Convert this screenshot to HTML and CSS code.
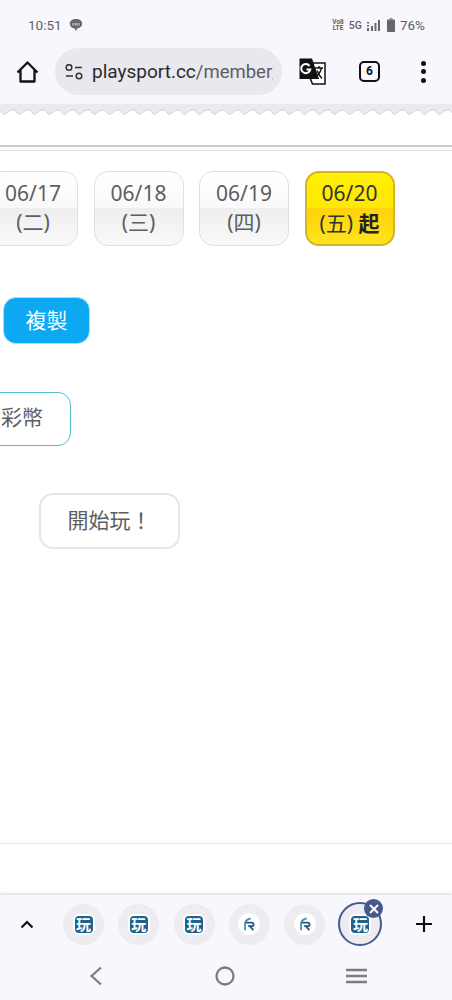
FILE: index.html
```html
<!DOCTYPE html>
<html lang="zh-Hant">
<head>
  <meta charset="UTF-8" />
  <meta name="viewport" content="width=device-width, initial-scale=1" />
  <title>playsport.cc</title>
  <link rel="stylesheet" href="styles.css">
</head>
<body>
  <svg class="defs" width="0" height="0">
    <symbol id="logo-r" viewBox="0 0 16 16">
      <path d="M3.500 15V7.500C3.500 4.500 6 2.500 10 1.500" fill="none" stroke="#2f9aa8" stroke-width="2"/>
      <path d="M4.500 6.500H11C14 6.500 14 10.500 11 10.500H7" fill="none" stroke="#26567f" stroke-width="2"/>
      <path d="M9 10.500L13 15" fill="none" stroke="#26567f" stroke-width="2"/>
    </symbol>
  </svg>

  <div class="statusbar">
    <div class="status-left">
      <span>10:51</span>
      <svg class="line-icon" width="14" height="14" viewBox="0 0 14 14">
        <path d="M7 1C3.400 1 .8 3 .8 5.800c0 2.500 2.100 4.300 5 4.700l.6 2.500 2-2.500c2.800-.5 4.800-2.300 4.800-4.700C13.200 3 10.600 1 7 1z" fill="#67676c"/>
        <path d="M4 5v2.500M6.200 5v2.500M8 5v2.500M10 5v2.500" stroke="#f8f7fe" stroke-width=".8"/>
      </svg>
    </div>
    <div class="status-right">
      <span class="volte">Vo8<br>LTE</span>
      <span class="fiveg">5G</span>
      <svg width="14" height="13" viewBox="0 0 14 13">
        <path d="M1 3h2v1.500H1zM1 6h2v1.500H1zM1 9h2v3H1zM5 7h2v5H5zM8.500 4h2v8h-2zM12 1h2v11h-2z" fill="#67676c"/>
      </svg>
      <svg class="battery" width="8" height="14" viewBox="0 0 8 14">
        <path d="M2.500 0h3v1.500h-3z" fill="#8b8b90"/>
        <rect y="1.500" width="8" height="12.500" rx="1" fill="#67676c"/>
      </svg>
      <span class="percent">76%</span>
    </div>
  </div>

  <div class="toolbar">
    <svg class="home" width="23" height="22" viewBox="0 0 23 22">
      <path d="M1.500 11.500L11.500 1.500l10 10M4.500 9v11.500h14V9" fill="none" stroke="#111" stroke-width="2.300" stroke-linejoin="round"/>
    </svg>
    <div class="urlbar">
      <svg width="18" height="16" viewBox="0 0 18 16">
        <circle cx="4" cy="3.500" r="2.800" fill="none" stroke="#333" stroke-width="1.500"/>
        <path d="M10 3.500h7M1 12h7" stroke="#333" stroke-width="1.600"/>
        <circle cx="14" cy="12" r="2.800" fill="none" stroke="#333" stroke-width="1.500"/>
      </svg>
      <span class="url"><span class="host">playsport.cc</span>/member/</span>
    </div>
    <svg class="translate" width="27" height="27" viewBox="0 0 27 27">
      <path d="M12 5h14v21H13.500l-2-5z" fill="#fff" stroke="#111" stroke-width="1.500"/>
      <path d="M.5.500h12.500l7 20.500H.5z" fill="#111"/>
      <path d="M10.500 7.800A4.600 4.600 0 1 0 11.300 11.500H7.500" fill="none" stroke="#fff" stroke-width="2"/>
      <path d="M16 10h8M20 8v2M22.500 10c-1 4-3 7-6 9M18 12.500c1 3 3 6 5 8" fill="none" stroke="#111" stroke-width="1.400"/>
    </svg>
    <div class="tabcount">6</div>
    <div class="dots"><i></i><i></i><i></i></div>
  </div>

  <svg class="wave" width="452" height="13">
    <defs>
      <pattern id="wave-p" width="15" height="13" patternUnits="userSpaceOnUse">
        <path d="M0 6C3 11 5 11 7.500 8.500 10 6 12 6 15 6V0H0z" fill="#ebebef"/>
        <path d="M0 6C3 11 5 11 7.500 8.500 10 6 12 6 15 6" fill="none" stroke="#cfcfd3"/>
      </pattern>
    </defs>
    <rect width="452" height="13" fill="url(#wave-p)"/>
  </svg>

  <div class="page">
    <div class="rule-block"></div>

    <div class="dates">
      <div class="date"><span class="day">06/17</span><span class="week">(二)</span></div>
      <div class="date"><span class="day">06/18</span><span class="week">(三)</span></div>
      <div class="date"><span class="day">06/19</span><span class="week">(四)</span></div>
      <div class="date date-on"><span class="day">06/20</span><span class="week">(五) <b>起</b></span></div>
    </div>

    <button class="btn-copy">複製</button>
    <button class="btn-coin">彩幣</button>
    <button class="btn-play">開始玩！</button>

    <div class="page-foot"></div>
  </div>

  <div class="tabstrip">
    <svg class="chev" width="14" height="9" viewBox="0 0 14 9">
      <path d="M1.500 7.500L7 2l5.500 5.500" fill="none" stroke="#111" stroke-width="2.200"/>
    </svg>
    <div class="tab"><span class="logo-wan">玩</span></div>
    <div class="tab"><span class="logo-wan">玩</span></div>
    <div class="tab"><span class="logo-wan">玩</span></div>
    <div class="tab"><span class="logo-white"><svg width="14" height="14"><use href="#logo-r"/></svg></span></div>
    <div class="tab"><span class="logo-white"><svg width="14" height="14"><use href="#logo-r"/></svg></span></div>
    <div class="tab tab-on">
      <span class="logo-wan">玩</span>
      <span class="tab-close">
        <svg width="10" height="10" viewBox="0 0 10 10"><path d="M1 1l8 8M9 1l-8 8" stroke="#fff" stroke-width="2"/></svg>
      </span>
    </div>
    <svg class="plus" width="18" height="18" viewBox="0 0 18 18">
      <path d="M9 1v16M1 9h16" stroke="#111" stroke-width="2.200"/>
    </svg>
  </div>

  <div class="navbar">
    <svg width="14" height="20" viewBox="0 0 14 20"><path d="M12 1.500L2.500 10l9.500 8.500" fill="none" stroke="#7d7d82" stroke-width="2.200"/></svg>
    <svg width="20" height="20" viewBox="0 0 20 20"><circle cx="10" cy="10" r="8.500" fill="none" stroke="#7d7d82" stroke-width="2.300"/></svg>
    <svg width="21" height="16" viewBox="0 0 21 16"><path d="M0 2h21M0 8h21M0 14h21" stroke="#7d7d82" stroke-width="2.300"/></svg>
  </div>
</body>
</html>
```

FILE: styles.css
```css
* {
  box-sizing: border-box;
}

html, body {
  margin: 0;
  padding: 0;
}

body {
  width: 452px;
  height: 1000px;
  overflow: hidden;
  display: flex;
  flex-direction: column;
  font-family: "Noto Sans", "Noto Sans CJK TC", sans-serif;
  background: #fff;
  color: #5e5e5e;
}

.defs {
  position: absolute;
}

/* status bar */
.statusbar {
  height: 44px;
  flex: none;
  background: #f8f7fe;
  padding: 6px 27px 0 28px;
  display: flex;
  justify-content: space-between;
  align-items: center;
  font-family: Roboto, sans-serif;
  font-size: 13.500px;
  color: #5f5f64;
}

.status-left {
  display: flex;
  align-items: center;
  gap: 7px;
}

.status-right {
  display: flex;
  align-items: center;
}

.volte {
  font-size: 6.500px;
  line-height: 6.500px;
  font-weight: 700;
  text-align: center;
  margin-right: 5px;
}

.fiveg {
  font-size: 10.500px;
  font-weight: 500;
  margin-right: 4px;
}

.battery {
  margin: 0 5px 0 7px;
}

/* toolbar */
.toolbar {
  height: 60px;
  flex: none;
  background: #f8f7fe;
  display: flex;
  align-items: center;
  padding: 0 0 5px 16px;
}

.home {
  flex: none;
}

.urlbar {
  width: 227px;
  height: 47px;
  margin-left: 16px;
  border-radius: 24px;
  background: #e8e8ee;
  display: flex;
  align-items: center;
  padding-left: 10px;
  gap: 9px;
  flex: none;
}

.url {
  width: 181px;
  overflow: hidden;
  white-space: nowrap;
  font-family: Roboto, sans-serif;
  font-size: 18.500px;
  color: #5c5c62;
}

.host {
  color: #2a2a2e;
  font-size: 19px;
}

.translate {
  margin-left: 17px;
  flex: none;
}

.tabcount {
  width: 21px;
  height: 21px;
  margin-left: 33px;
  border: 2px solid #111;
  border-radius: 5px;
  font-family: Roboto, sans-serif;
  font-size: 12px;
  font-weight: 700;
  line-height: 17px;
  text-align: center;
  color: #111;
  flex: none;
}

.dots {
  margin-left: 41px;
  display: flex;
  flex-direction: column;
  gap: 3.500px;
}

.dots i {
  display: block;
  width: 5px;
  height: 5px;
  border-radius: 50%;
  background: #111;
}

.wave {
  display: block;
  flex: none;
  background: #fff;
}

/* page */
.page {
  flex: 1;
  display: flex;
  flex-direction: column;
  align-items: flex-start;
  background: #fff;
}

.rule-block {
  width: 100%;
  height: 6px;
  margin-top: 28px;
  border-top: 2px solid #cdcdcd;
  border-bottom: 1px solid #e3e3e3;
  flex: none;
}

.dates {
  display: flex;
  gap: 15.500px;
  margin: 20px 0 0 -12px;
}

.date {
  width: 90px;
  height: 75px;
  border: 1px solid #e0e0e0;
  border-radius: 14px;
  overflow: hidden;
  display: flex;
  flex-direction: column;
  align-items: center;
  font-size: 21px;
  line-height: 28px;
  background: linear-gradient(#fff, #f9f9f9 49%, #eee 49%, #f9f9f9);
  flex: none;
}

.day {
  height: 36px;
  padding-top: 7px;
}

.date-on {
  border: 2px solid #d4b52a;
  color: #333;
  background: linear-gradient(#fff000, #ffe800 49%, #fdd20c 49%, #ffe41a);
}

.date-on .day {
  padding-top: 6px;
}

.date-on b {
  color: #222;
}

.btn-copy {
  width: 87px;
  height: 47px;
  margin: 51px 0 0 3px;
  border: 1px solid #a5def7;
  border-radius: 13px;
  background: #0ca8f1;
  color: #fff;
  font: 21px/1 "Noto Sans", "Noto Sans CJK TC", sans-serif;
}

.btn-coin {
  width: 100px;
  height: 54px;
  margin: 48px 0 0 -29px;
  padding: 0 0 4px 2px;
  border: 1px solid #58bcd8;
  border-radius: 13px;
  background: #fff;
  color: #5e5e5e;
  text-align: center;
  font: 21px/1 "Noto Sans", "Noto Sans CJK TC", sans-serif;
}

.btn-play {
  width: 141px;
  height: 56px;
  margin: 47px 0 0 39px;
  padding: 0 0 2px;
  border: 2px solid #e6e6e6;
  border-radius: 14px;
  background: #fff;
  color: #5e5e5e;
  font: 21px/1 "Noto Sans", "Noto Sans CJK TC", sans-serif;
}

.page-foot {
  width: 100%;
  margin-top: 294px;
  border-top: 1px solid #e6e6e6;
}

/* tabs */
.tabstrip {
  height: 56px;
  flex: none;
  background: #f8f7fe;
  box-shadow: 0 -1px 3px rgba(0, 0, 0, .18);
  display: flex;
  align-items: center;
  padding: 2px 0 0 20px;
}

.chev {
  margin-right: 29px;
  flex: none;
}

.tab {
  position: relative;
  width: 41px;
  height: 41px;
  border-radius: 50%;
  background: #ededf1;
  margin-right: 14.300px;
  display: flex;
  align-items: center;
  justify-content: center;
  flex: none;
}

.tab-on {
  width: 44px;
  height: 44px;
  margin: 0 0 0 -1px;
  border: 2px solid #46598f;
}

.logo-wan {
  width: 18px;
  height: 17px;
  border-radius: 4px;
  background: #1d6390;
  color: #fff;
  font-size: 15px;
  font-weight: 700;
  line-height: 17px;
  text-align: center;
  box-shadow: 0 0 0 2px #fff;
}

.logo-white {
  width: 22px;
  height: 22px;
  border-radius: 50%;
  background: #fff;
  display: flex;
  align-items: center;
  justify-content: center;
}

.tab-close {
  position: absolute;
  top: -5px;
  right: -3px;
  width: 19px;
  height: 19px;
  border-radius: 50%;
  background: #46598f;
  display: flex;
  align-items: center;
  justify-content: center;
}

.plus {
  margin-left: 33px;
  flex: none;
}

/* nav */
.navbar {
  height: 49px;
  flex: none;
  background: #f8f7fe;
  padding: 0 85px 0 89px;
  display: flex;
  justify-content: space-between;
  align-items: center;
}
```
